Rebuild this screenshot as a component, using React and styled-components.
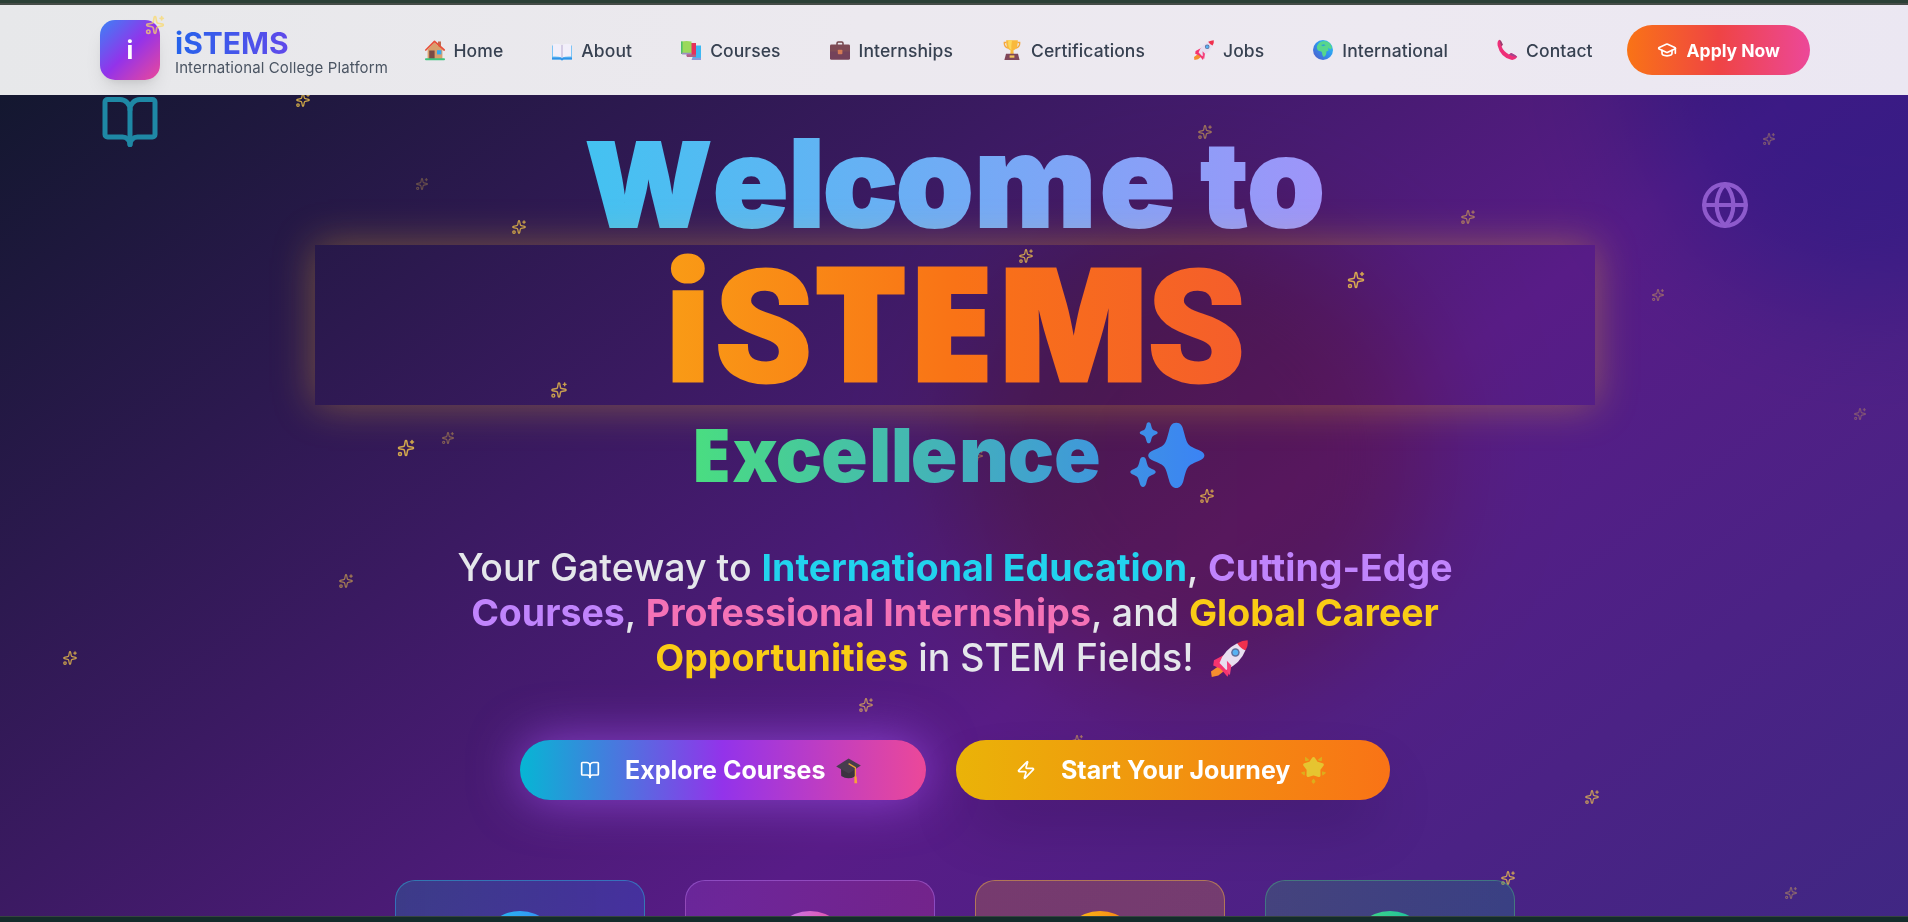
import React from "react";
import styled, { createGlobalStyle, css } from "styled-components";
import { Sparkles, BookOpen, Globe, GraduationCap, Zap } from "lucide-react";

const GlobalStyle = createGlobalStyle`
  * { box-sizing: border-box; }
  html, body { margin: 0; padding: 0; overflow: hidden; background: #16302c; }
  body { font-family: Inter, "Liberation Sans", sans-serif; }
`;

const Page = styled.div`
  width: 1910px;
  height: 922px;
  display: flex;
  flex-direction: column;
  overflow: hidden;
`;

const TopEdge = styled.div`
  height: 5px;
  flex: none;
  background: #2b4036;
  border-bottom: 2px solid #454c47;
`;

const BottomEdge = styled.div`
  height: 6px;
  flex: none;
  background: #142c2b;
  border-top: 1px solid #35443f;
`;

/* ---------- Header ---------- */

const Header = styled.header`
  height: 90px;
  flex: none;
  display: flex;
  align-items: center;
  padding: 0 100px;
  background: linear-gradient(100deg, #e7e8ea 0%, #ece9ef 45%, #ede9f1 72%, #ebe7f2 100%);
`;

const Brand = styled.div`
  width: 324.5px;
  flex: none;
  display: flex;
  align-items: center;
  gap: 15px;
`;

const Logo = styled.div`
  position: relative;
  width: 60px;
  height: 60px;
  display: flex;
  align-items: center;
  justify-content: center;
  border-radius: 15px;
  background: linear-gradient(to bottom right, #3b82f6, #9333ea, #ec4899);
  box-shadow: 0 12px 19px -4px rgba(0, 0, 0, 0.1), 0 5px 8px -5px rgba(0, 0, 0, 0.1);
  color: #fff;
  font-size: 25px;
  font-weight: 700;
`;

const LogoSparkle = styled(Sparkles)`
  position: absolute;
  top: -5px;
  right: -5px;
  color: #fad96a;
  opacity: 0.72;
`;

const BrandText = styled.div`
  display: flex;
  flex-direction: column;
  margin-top: 6px;
`;

const BrandName = styled.span`
  font-size: 30px;
  line-height: 30px;
  font-weight: 700;
  background: linear-gradient(to right, #2563eb, #9333ea);
  -webkit-background-clip: text;
  background-clip: text;
  color: transparent;
`;

const BrandTagline = styled.span`
  font-size: 15px;
  line-height: 20px;
  letter-spacing: 0.11px;
  white-space: nowrap;
  color: #4b5563;
`;

const Nav = styled.nav`
  display: flex;
  gap: 49.1px;
`;

const NavLink = styled.a`
  display: flex;
  align-items: center;
  gap: 9px;
  font-size: 17.5px;
  line-height: 25px;
  font-weight: 500;
  letter-spacing: 0.08px;
  color: #374151;
`;

const ApplyButton = styled.button`
  margin-left: auto;
  height: 50px;
  padding: 0 30px;
  display: flex;
  align-items: center;
  gap: 10px;
  border: 0;
  border-radius: 25px;
  background: linear-gradient(to right, #f97316, #ef4444, #ec4899);
  color: #fff;
  font: 700 17.5px/25px Inter, sans-serif;
  white-space: nowrap;
`;

/* ---------- Emoji drawings ---------- */

const EmojiSvg = styled.svg`
  display: block;
  flex: none;
  overflow: visible;
  width: ${(p) => p.$size}px;
  height: ${(p) => p.$size}px;
`;

const InlineEmoji = styled.span`
  display: inline-block;
  vertical-align: -6px;
  margin: 0 7px;
`;

const HouseEmoji = () => (
  <EmojiSvg $size={20} viewBox="0 0 20 20">
    <rect x="13" y="1.5" width="3" height="6" fill="#c2694e" />
    <path d="M2.6 9.5 9.5 2.5 17.4 9.5V19H2.6Z" fill="#d9a06c" />
    <rect x="4.2" y="10.5" width="5.4" height="8.5" fill="#7b4a45" />
    <rect x="12" y="10.2" width="4.4" height="4.2" fill="#35a8f0" />
    <path d="M.8 10 9.5 1.3 19.2 10" fill="none" stroke="#e8503a" strokeWidth="1.7" strokeLinecap="round" strokeLinejoin="round" />
    <rect x="0" y="18.3" width="20" height="1.9" rx=".9" fill="#3fc47c" />
  </EmojiSvg>
);

const OpenBookEmoji = () => (
  <EmojiSvg $size={20} viewBox="0 0 20 20">
    <path d="M0 5.5H9L10 6.5 11 5.5H20V19.6H11.5L10 20.6 8.5 19.6H0Z" fill="#6fc0f5" />
    <path d="M.9 4.2Q6 3 10 5 14 3 19.1 4.2V16.5Q14 16 10 17.6 6 16 .9 16.5Z" fill="#f2effa" />
    <path d="M10 5V17.5" stroke="#c9bfdc" strokeWidth="1.4" />
    <path d="M0 17.6H8.6L10 18.6 11.4 17.6H20V19.6H11.5L10 20.6 8.5 19.6H0Z" fill="#2f93e8" />
  </EmojiSvg>
);

const BooksEmoji = () => (
  <EmojiSvg $size={20} viewBox="0 0 20 20">
    <path d="M11.5 5.5H20V20H11.5Z" fill="#3cb8f3" />
    <path d="M11.5 17.8H20V20H10.5Z" fill="#8899dc" />
    <path d="M6 3H15V17H6Z" fill="#e6315b" />
    <path d="M5 14.5H15V17H6Z" fill="#b06186" />
    <path d="M0 1.6Q5 .4 10.5 1.4V13.4H0Z" fill="#9bd95a" />
    <path d="M0 1.6H1.6V14H0Z" fill="#4fbf68" />
    <path d="M.4 12.8H10.5V14.6H1.2Z" fill="#9a8fc0" />
  </EmojiSvg>
);

const BriefcaseEmoji = () => (
  <EmojiSvg $size={20} viewBox="0 0 20 20">
    <path d="M7 5V3.2Q7 2 8.2 2H11.8Q13 2 13 3.2V5" fill="none" stroke="#74454b" strokeWidth="1.5" />
    <rect x="0" y="4.4" width="20" height="15.2" rx="1.4" fill="#7e4a55" />
    <path d="M0 11.5H20V18.2Q20 19.6 18.6 19.6H1.4Q0 19.6 0 18.2Z" fill="#74425a" />
    <rect x="7.8" y="9.8" width="4.6" height="4.4" rx=".8" fill="#d47a55" />
  </EmojiSvg>
);

const TrophyEmoji = () => (
  <EmojiSvg $size={20} viewBox="0 0 20 20">
    <path d="M4.6 2.5H2.3Q2 7 6 8M15.4 2.5H17.7Q18 7 14 8" fill="none" stroke="#f5a83d" strokeWidth="1.3" />
    <path d="M4.2.2H15.8Q16.2 9 11.4 10.4L11.8 14.5H8.2L8.6 10.4Q3.8 9 4.2.2Z" fill="#f9b93c" />
    <path d="M6.2.2H10Q9 6 9.4 10.2 5.6 8 6.2.2Z" fill="#fcd75c" />
    <path d="M4 13.8H16L17.6 20H2.4Z" fill="#7f4659" />
    <rect x="7.6" y="15.4" width="4.8" height="2.3" fill="#f4c65b" />
  </EmojiSvg>
);

const RocketEmoji = ({ size = 20 }) => (
  <EmojiSvg $size={size} viewBox="0 0 20 20">
    <path d="M4.8 13.6 0 17 .4 20 4 19.2 7.6 16.4Z" fill="#f58f2e" />
    <path d="M1.6 11 8 7.6 9.8 17.8 8.9 19.9 5.2 15.6 1.2 13.8Z" fill="#f5346f" />
    <path d="M4.6 12.4Q7 5.4 14.2 1.8L18.6 5.6Q16 12.6 8.2 16.2Z" fill="#e8dff0" />
    <path d="M8.6 11.2 11 13.8 10.2 19 8.8 17Z" fill="#f4427e" />
    <path d="M14.2 1.8Q17 .2 19.8.2 20.2 3.2 18.6 5.6 15.8 4.6 14.2 1.8Z" fill="#f0304d" />
    <circle cx="13.2" cy="6.8" r="2.3" fill="#5d6f9c" />
    <circle cx="13.2" cy="6.8" r="1.5" fill="#55b2f3" />
  </EmojiSvg>
);

const EarthEmoji = () => (
  <EmojiSvg $size={20} viewBox="0 0 20 20">
    <defs>
      <linearGradient id="sea" x1="1" y1="0" x2="0.1" y2="0.9">
        <stop offset="0" stopColor="#35c8ee" />
        <stop offset="0.5" stopColor="#2e97f0" />
        <stop offset="1" stopColor="#4c62cf" />
      </linearGradient>
    </defs>
    <circle cx="10" cy="10" r="10" fill="url(#sea)" />
    <path d="M4 6Q6 1.2 11 1 16.8 1 19 7.4L17.6 9.4 15 7.8 15.6 10.4 13.4 11.4Q13.6 15.6 10.6 17 9 16 9 12.6 8.6 10.8 6 11 3.4 9.6 4 6Z" fill="#57d68c" />
    <path d="M8 5 11 4.2 12.6 5.2 10 6.2Z" fill="#2ea0d4" />
  </EmojiSvg>
);

const PhoneEmoji = () => (
  <EmojiSvg $size={20} viewBox="0 0 20 20">
    <path d="M2.4-.2Q4 .2 5.6 4.2 5.6 5.4 4.6 6.6 6.4 11.6 12 14.4L14.2 13Q19.6 15.6 20.2 17 18 20.4 14.2 19.8 3.4 17 .6 5.4 0 1 2.4-.2Z" fill="#ee2f78" />
    <path d="M2.4-.2Q4 .2 5.6 4.2L4.6 6.6Q3.4 4 2.4-.2Z" fill="#94406f" />
    <path d="M12 14.4 14.2 13Q19.6 15.6 20.2 17 16 16.6 12 14.4Z" fill="#a2458d" />
  </EmojiSvg>
);

const CapEmoji = () => (
  <EmojiSvg $size={25} viewBox="0 0 25 25">
    <path d="M5 10.5 19 11V18.4Q12 22.4 5.2 18Z" fill="#3b3340" />
    <path d="M.2 8.4 12.6.4 24.8 7.6 12.8 15.6Z" fill="#463d4d" />
    <path d="M12.6 5.6 19.4 9.6V20" fill="none" stroke="#e9a235" strokeWidth="1.3" />
    <path d="M18.4 18.4H20.6L21.2 25.2H18.4Z" fill="#f7a23a" />
  </EmojiSvg>
);

const GlowingStarEmoji = () => (
  <EmojiSvg $size={25} viewBox="0 0 25 25">
    <g fill="#dcae1c" stroke="#dcae1c" strokeWidth="1.2" strokeLinejoin="round">
      <path d="M4.6-.4 7.4 2 4.8 2.6Z" />
      <path d="M20.4-.4 17.6 2 20.2 2.6Z" />
      <path d="M.8 14.8 3.4 14 3.2 16.8Z" />
      <path d="M24.2 14.8 21.6 14 21.8 16.8Z" />
      <path d="M12.5 21.4 13.8 23.6 12.5 25 11.2 23.6Z" />
    </g>
    <path d="M12.5.6 15.4 5 21.2 6.8 17.8 11.4 17.9 17.4 12.5 15.8 7.1 17.4 7.2 11.4 3.8 6.8 9.6 5Z" fill="#e6c430" stroke="#e6c430" strokeWidth="3.2" strokeLinejoin="round" />
  </EmojiSvg>
);

const NAV_ITEMS = [
  { label: "Home", Emoji: HouseEmoji },
  { label: "About", Emoji: OpenBookEmoji },
  { label: "Courses", Emoji: BooksEmoji },
  { label: "Internships", Emoji: BriefcaseEmoji },
  { label: "Certifications", Emoji: TrophyEmoji },
  { label: "Jobs", Emoji: RocketEmoji },
  { label: "International", Emoji: EarthEmoji },
  { label: "Contact", Emoji: PhoneEmoji },
];

/* ---------- Hero ---------- */

const Hero = styled.main`
  position: relative;
  flex: 1;
  min-height: 0;
  overflow: hidden;
  background: linear-gradient(to bottom right, #0f172a, #581c87, #312e81) 0 -90px / 1910px 1480px no-repeat;
`;

const Blob = styled.div`
  position: absolute;
  left: ${(p) => p.$x}px;
  top: ${(p) => p.$y}px;
  width: 480px;
  height: 480px;
  border-radius: 50%;
  filter: blur(${(p) => p.$blur}px);
  mix-blend-mode: multiply;
  background: ${(p) => p.$fill};
`;

const star = css`
  position: absolute;
  left: ${(p) => p.$x}px;
  top: ${(p) => p.$y - 95}px;
  transform: translate(-50%, -50%);
`;

const Twinkle = styled(({ $x, $y, $alpha, ...rest }) => <Sparkles {...rest} />)`
  ${star}
  color: #facc4a;
  opacity: ${(p) => p.$alpha};
`;

const FloatingBook = styled(({ $x, $y, ...rest }) => <BookOpen {...rest} />)`
  ${star}
  color: #22d3ee;
  opacity: 0.6;
`;

const FloatingGlobe = styled(({ $x, $y, ...rest }) => <Globe {...rest} />)`
  ${star}
  color: #c084fc;
  opacity: 0.6;
`;

const TWINKLES = [
  [303, 100, 15, 0.8],
  [421.5, 184, 13, 0.3],
  [519, 227, 15, 0.75],
  [1205, 132, 15, 0.5],
  [1769, 139, 13, 0.35],
  [1468, 217, 15, 0.5],
  [1026, 256, 15, 0.75],
  [1356, 280, 18, 0.8],
  [1658, 295, 13, 0.4],
  [559, 390, 17, 0.75],
  [406, 448, 18, 0.8],
  [448, 438, 13, 0.4],
  [977, 456, 13, 0.4],
  [1207, 496, 15, 0.75],
  [346, 581, 15, 0.55],
  [70, 658, 15, 0.75],
  [866, 705, 15, 0.65],
  [1077, 741, 13, 0.5],
  [1592, 797, 15, 0.7],
  [1508, 878, 15, 0.75],
  [1791, 893, 13, 0.4],
  [1860, 414, 13, 0.3],
];

const Content = styled.div`
  position: relative;
  width: 1280px;
  margin: 0 auto;
  padding-top: 30px;
  display: flex;
  flex-direction: column;
  align-items: center;
`;

const Title = styled.h1`
  width: 100%;
  margin: 0 0 40px;
  display: flex;
  flex-direction: column;
  align-items: center;
  font-weight: 900;
  white-space: nowrap;
`;

const TitleLine = styled.span`
  display: block;
  text-align: center;
  background: ${(p) => p.$fill};
  -webkit-background-clip: text;
  background-clip: text;
  color: transparent;
`;

const WelcomeLine = styled(TitleLine)`
  width: 100%;
  height: 120px;
  font-size: 117px;
  line-height: 120px;
  -webkit-text-stroke: 2.2px transparent;
`;

const NameGlow = styled.span`
  width: 100%;
  box-shadow: 0 0 38px rgba(251, 191, 36, 0.36);
`;

const NameLine = styled(TitleLine)`
  height: 160px;
  font-size: 155px;
  line-height: 160px;
  -webkit-text-stroke: 3px transparent;
`;

const ExcellenceRow = styled.span`
  display: flex;
  align-items: flex-start;
  height: 100px;
  padding-right: 15px;
`;

const ExcellenceLine = styled(TitleLine)`
  height: 100px;
  font-size: 75px;
  line-height: 100px;
`;

const ExcellenceStars = styled.svg`
  display: block;
  width: 75px;
  height: 66px;
  margin: 17px 0 0 29px;
`;

const Letter = styled.span`
  font-family: ${(p) => p.$family || "Inter"}, sans-serif;
  font-size: ${(p) => p.$size}px;
  line-height: 0;
  margin-left: ${(p) => p.$gap || 0}px;
`;

const Letters = ({ of }) =>
  of.map(([ch, size, gap, family], i) => (
    <Letter key={i} $size={size} $gap={gap} $family={family}>
      {ch}
    </Letter>
  ));

const WELCOME = [
  ["W", 117, 0], ["e", 124, 1], ["l", 121, 0.7], ["c", 124, -1.6], ["o", 124, -1.8], ["m", 129, 1], ["e", 124, 3.8],
  [" ", 117, 0], ["t", 118, 2.3], ["o", 124, -0.8],
];

const NAME = [
  ["i", 169, 0, "Roboto"], ["S", 156, 3.4, "Roboto"], ["T", 157, 1.8, "'Open Sans'"], ["E", 157, 0.3, "'Open Sans'"],
  ["M", 154, 6.6], ["S", 156, 0.3, "Roboto"],
];

const EXCELLENCE = [
  ["E", 74, 0, "'Open Sans'"], ["x", 75, 1.3], ["c", 77, -2.2], ["e", 77, -1.4], ["l", 74, 1.6], ["l", 74, 0],
  ["e", 77, -2.2], ["n", 77, 1.5], ["c", 77, -1.2], ["e", 77, -0.4],
];

const Lead = styled.p`
  margin: 0 0 60px;
  font-size: 37.5px;
  line-height: 45px;
  font-weight: 500;
  text-align: center;
  color: #e5e7eb;
  white-space: nowrap;
`;

const Highlight = styled.span`
  font-weight: 700;
  color: ${(p) => p.$color};
`;

const Actions = styled.div`
  display: flex;
  gap: 30px;
  margin-bottom: 80px;
`;

const ActionButton = styled.button`
  width: ${(p) => p.$width}px;
  height: 60px;
  padding: 0 0 0 60px;
  display: flex;
  align-items: center;
  border: 0;
  border-radius: 30px;
  background: ${(p) => p.$fill};
  box-shadow: ${(p) => p.$shadow};
  color: #fff;
  font: 700 25px/35px Inter, sans-serif;
  white-space: nowrap;
`;

const ActionLabel = styled.span`
  margin: 0 11px 0 25px;
`;

const Cards = styled.div`
  display: grid;
  grid-template-columns: repeat(4, 250px);
  gap: 40px;
`;

const Card = styled.div`
  height: 260px;
  padding-top: 30px;
  display: flex;
  justify-content: center;
  align-items: flex-start;
  border: 1px solid ${(p) => p.$border};
  border-radius: 20px;
  background: ${(p) => p.$fill};
`;

const CardDisc = styled.div`
  width: 80px;
  height: 80px;
  border-radius: 50%;
  background: ${(p) => p.$fill};
`;

const CARDS = [
  {
    border: "rgba(34,211,238,0.4)",
    fill: "linear-gradient(to right, rgba(44,100,160,0.45), rgba(50,80,200,0.4))",
    disc: "linear-gradient(to right, #22c6ee, #3b82f6)",
  },
  {
    border: "rgba(192,132,252,0.4)",
    fill: "linear-gradient(to right, rgba(150,60,200,0.32), rgba(180,50,150,0.32))",
    disc: "linear-gradient(to right, #c084fc, #ec4899)",
  },
  {
    border: "rgba(250,190,60,0.45)",
    fill: "linear-gradient(to right, rgba(180,110,70,0.36), rgba(185,110,75,0.36))",
    disc: "linear-gradient(to right, #facc15, #f97316)",
  },
  {
    border: "rgba(74,222,128,0.35)",
    fill: "linear-gradient(to right, rgba(50,140,110,0.32), rgba(30,120,130,0.34))",
    disc: "linear-gradient(to right, #4ade80, #14b8a6)",
  },
];

const fourPoint = (cx, cy, rx, ry) => {
  const p = (x, y) => `${(cx + x * rx).toFixed(1)} ${(cy + y * ry).toFixed(1)}`;
  return `M${p(0, -1)}C${p(0.16, -1)} ${p(0.22, -0.9)} ${p(0.26, -0.75)}C${p(0.4, -0.3)} ${p(0.4, -0.32)} ${p(0.8, -0.17)}C${p(1.07, -0.07)} ${p(1.07, 0.07)} ${p(0.8, 0.17)}C${p(0.4, 0.32)} ${p(0.4, 0.3)} ${p(0.26, 0.75)}C${p(0.18, 1.08)} ${p(-0.18, 1.08)} ${p(-0.26, 0.75)}C${p(-0.4, 0.3)} ${p(-0.4, 0.32)} ${p(-0.8, 0.17)}C${p(-1.07, 0.07)} ${p(-1.07, -0.07)} ${p(-0.8, -0.17)}C${p(-0.4, -0.32)} ${p(-0.4, -0.3)} ${p(-0.26, -0.75)}C${p(-0.22, -0.9)} ${p(-0.16, -1)} ${p(0, -1)}Z`;
};

export default function App() {
  return (
    <Page>
      <GlobalStyle />
      <TopEdge />
      <Header>
        <Brand>
          <Logo>
            i
            <LogoSparkle size={20} />
          </Logo>
          <BrandText>
            <BrandName>iSTEMS</BrandName>
            <BrandTagline>International College Platform</BrandTagline>
          </BrandText>
        </Brand>
        <Nav>
          {NAV_ITEMS.map(({ label, Emoji }) => (
            <NavLink key={label}>
              <Emoji />
              {label}
            </NavLink>
          ))}
        </Nav>
        <ApplyButton>
          <GraduationCap size={20} />
          Apply Now
        </ApplyButton>
      </Header>

      <Hero>
        <Blob $x={1630} $y={-270} $blur={60} $fill="rgba(110, 215, 250, 0.58)" />
        <Blob $x={955} $y={120} $blur={58} $fill="linear-gradient(to right, rgba(235,190,60,0.42), rgba(255,120,70,0.42))" />
        {TWINKLES.map(([x, y, size, alpha]) => (
          <Twinkle key={`${x}-${y}`} $x={x} $y={y} size={size} $alpha={alpha} />
        ))}
        <FloatingBook $x={130} $y={122} size={60} />
        <FloatingGlobe $x={1725} $y={205} size={50} />

        <Content>
          <Title>
            <WelcomeLine $fill="linear-gradient(to right, #22d3ee, #c084fc)">
              <Letters of={WELCOME} />
            </WelcomeLine>
            <NameGlow>
              <NameLine $fill="linear-gradient(to right, #facc15, #f97316, #ef4444)">
                <Letters of={NAME} />
              </NameLine>
            </NameGlow>
            <ExcellenceRow>
              <ExcellenceLine $fill="linear-gradient(to right, #4ade80, #3f97dc)">
                <Letters of={EXCELLENCE} />
              </ExcellenceLine>
              <ExcellenceStars viewBox="0 0 75 66">
                <defs>
                  <linearGradient id="starFill" gradientUnits="userSpaceOnUse" x1="0" x2="75" y1="0" y2="0">
                    <stop offset="0" stopColor="#3e91e4" />
                    <stop offset="1" stopColor="#3b83f5" />
                  </linearGradient>
                </defs>
                <path fill="url(#starFill)" d={fourPoint(46.3, 33.4, 28, 32.6)} />
                <path fill="url(#starFill)" d={fourPoint(18.7, 10.8, 9, 10.5)} />
                <path fill="url(#starFill)" d={fourPoint(13, 50, 12.6, 15)} />
              </ExcellenceStars>
            </ExcellenceRow>
          </Title>

          <Lead>
            Your Gateway to <Highlight $color="#22d3ee">International Education</Highlight>,{" "}
            <Highlight $color="#c084fc">Cutting-Edge</Highlight>
            <br />
            <Highlight $color="#c084fc">Courses</Highlight>,{" "}
            <Highlight $color="#f472b6">Professional Internships</Highlight>, and{" "}
            <Highlight $color="#facc15">Global Career</Highlight>
            <br />
            <Highlight $color="#facc15">Opportunities</Highlight> in STEM Fields!{" "}
            <InlineEmoji>
              <RocketEmoji size={37} />
            </InlineEmoji>
          </Lead>

          <Actions>
            <ActionButton
              $width={406}
              $fill="linear-gradient(to right, #06b6d4, #9333ea, #ec4899)"
              $shadow="0 0 50px rgba(168, 85, 247, 0.66)"
            >
              <BookOpen size={20} />
              <ActionLabel>Explore Courses</ActionLabel>
              <CapEmoji />
            </ActionButton>
            <ActionButton
              $width={434}
              $fill="linear-gradient(to right, #eab308, #f97316)"
              $shadow="0 31px 62px -15px rgba(0, 0, 0, 0.25)"
            >
              <Zap size={20} />
              <ActionLabel>Start Your Journey</ActionLabel>
              <GlowingStarEmoji />
            </ActionButton>
          </Actions>

          <Cards>
            {CARDS.map((c) => (
              <Card key={c.disc} $border={c.border} $fill={c.fill}>
                <CardDisc $fill={c.disc} />
              </Card>
            ))}
          </Cards>
        </Content>
      </Hero>
      <BottomEdge />
    </Page>
  );
}
